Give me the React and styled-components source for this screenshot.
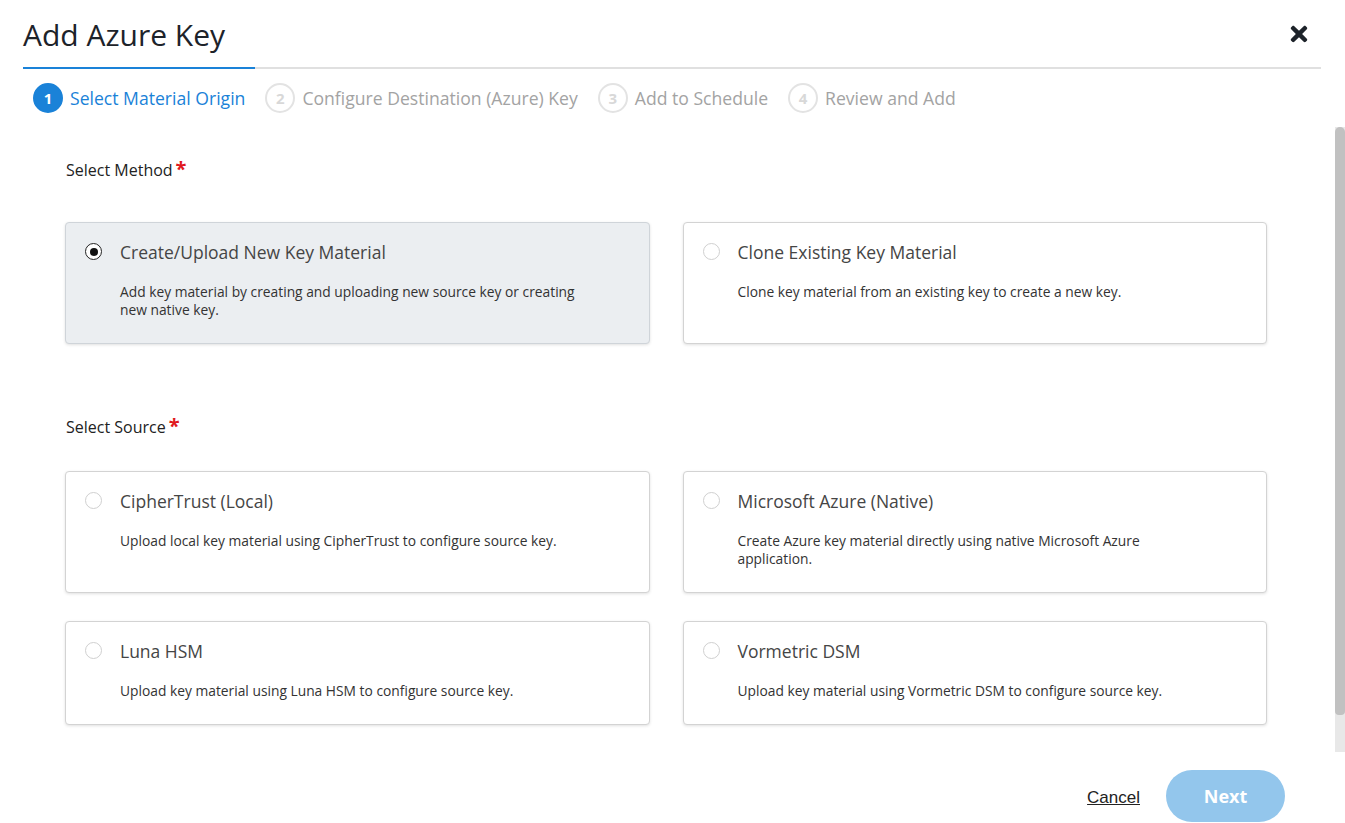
import React from "react";
import styled, { createGlobalStyle } from "styled-components";
import { FaTimes } from "react-icons/fa";

const GlobalStyle = createGlobalStyle`
  html, body {
    margin: 0;
    padding: 0;
    background: #ffffff;
    font-family: "Open Sans", "Noto Sans", sans-serif;
    overflow: hidden;
  }
  * {
    box-sizing: border-box;
  }
`;

const Page = styled.div`
  width: 1345px;
  height: 823px;
  display: flex;
  flex-direction: column;
  overflow: hidden;
`;

const Header = styled.div`
  margin: 0 24px 0 23px;
  display: flex;
  align-items: flex-end;
  justify-content: space-between;
  border-bottom: 2px solid #e0e0e0;
  height: 69px;
  flex-shrink: 0;
`;

const TitleTab = styled.div`
  width: 232px;
  border-bottom: 2px solid #1a82d8;
  margin-bottom: -2px;
  padding-bottom: 14px;
`;

const Title = styled.h1`
  margin: 0;
  font-size: 30px;
  font-weight: 400;
  line-height: 36px;
  color: #1d232a;
  white-space: nowrap;
`;

const CloseButton = styled.button`
  border: none;
  background: none;
  padding: 0;
  margin: 0 10px 21px 0;
  color: #1d232a;
  display: flex;
  cursor: pointer;
`;

const Stepper = styled.div`
  display: flex;
  align-items: center;
  height: 58px;
  flex-shrink: 0;
  padding-left: 33px;
  gap: 20px;
`;

const Step = styled.div`
  display: flex;
  align-items: center;
  gap: 7px;
`;

const StepCircle = styled.div`
  width: 30px;
  height: 30px;
  border-radius: 50%;
  display: flex;
  align-items: center;
  justify-content: center;
  font-size: 15px;
  font-weight: 700;
  background: ${(p) => (p.$active ? "#1a82d8" : "#ffffff")};
  color: ${(p) => (p.$active ? "#ffffff" : "#d8d8d8")};
  border: 2px solid ${(p) => (p.$active ? "#1a82d8" : "#e3e3e3")};
`;

const StepLabel = styled.span`
  font-size: 17.6px;
  color: ${(p) => (p.$active ? "#1a82d8" : "#a3a3a3")};
  white-space: nowrap;
`;

const Body = styled.div`
  height: 625px;
  flex-shrink: 0;
  display: flex;
`;

const Content = styled.div`
  flex: 1;
  overflow: hidden;
  padding: 32px 68px 0 65px;
`;

const ScrollTrack = styled.div`
  width: 10px;
  background: #e8e8e8;
  display: flex;
  flex-direction: column;
`;

const ScrollThumb = styled.div`
  height: 588px;
  background: #c1c1c1;
  border-radius: 5px 5px 4px 4px;
`;

const SectionLabel = styled.div`
  font-size: 16px;
  line-height: 22px;
  color: #222;
  margin-left: 1px;
  margin-bottom: ${(p) => p.$gap}px;
`;

const Required = styled.span`
  color: #e0191e;
  font-size: 20px;
  font-weight: 700;
  margin-left: 3px;
  line-height: 0;
  vertical-align: 0;
`;

const CardGrid = styled.div`
  display: grid;
  grid-template-columns: 1fr 1fr;
  column-gap: 33px;
  row-gap: 28px;
  margin-bottom: ${(p) => p.$gap || 0}px;
`;

const Card = styled.div`
  position: relative;
  border: 1px solid ${(p) => (p.$selected ? "#cfd4d9" : "#d3d3d3")};
  border-radius: 4px;
  background: ${(p) => (p.$selected ? "#ebeef1" : "#ffffff")};
  box-shadow: 0 1px 3px rgba(0, 0, 0, 0.12);
  padding: 17px 20px 24px 54px;
  cursor: pointer;
`;

const Radio = styled.span`
  position: absolute;
  left: 19px;
  top: 20px;
  width: 17px;
  height: 17px;
  border-radius: 50%;
  background: #fff;
  border: ${(p) => (p.$checked ? "1.5px solid #222" : "1px solid #d0d0d0")};
  display: flex;
  align-items: center;
  justify-content: center;

  &::after {
    content: "";
    display: ${(p) => (p.$checked ? "block" : "none")};
    width: 8px;
    height: 8px;
    border-radius: 50%;
    background: #111;
  }
`;

const CardTitle = styled.div`
  font-size: 17.5px;
  line-height: 24px;
  color: #454545;
  margin-bottom: 19px;
`;

const CardText = styled.div`
  font-size: 13.8px;
  line-height: 18px;
  color: #333;
  max-width: 465px;
`;

const Footer = styled.div`
  flex: 1;
  display: flex;
  justify-content: flex-end;
  align-items: flex-start;
  padding: 18px 60px 0 0;
  gap: 26px;
`;

const CancelLink = styled.a`
  font-family: "Liberation Sans", Arial, sans-serif;
  font-size: 17px;
  color: #222;
  text-decoration: underline;
  margin-top: 18px;
  cursor: pointer;
`;

const NextButton = styled.button`
  width: 119px;
  height: 52px;
  border: none;
  border-radius: 26px;
  background: #93c6ec;
  color: #ffffff;
  font-family: "Open Sans", sans-serif;
  font-size: 18px;
  font-weight: 700;
  cursor: not-allowed;
`;

const steps = [
  "Select Material Origin",
  "Configure Destination (Azure) Key",
  "Add to Schedule",
  "Review and Add",
];

const methods = [
  {
    title: "Create/Upload New Key Material",
    text: "Add key material by creating and uploading new source key or creating new native key.",
    selected: true,
  },
  {
    title: "Clone Existing Key Material",
    text: "Clone key material from an existing key to create a new key.",
  },
];

const sources = [
  {
    title: "CipherTrust (Local)",
    text: "Upload local key material using CipherTrust to configure source key.",
  },
  {
    title: "Microsoft Azure (Native)",
    text: "Create Azure key material directly using native Microsoft Azure application.",
  },
  {
    title: "Luna HSM",
    text: "Upload key material using Luna HSM to configure source key.",
  },
  {
    title: "Vormetric DSM",
    text: "Upload key material using Vormetric DSM to configure source key.",
  },
];

function OptionCard({ title, text, selected }) {
  return (
    <Card $selected={selected}>
      <Radio $checked={selected} />
      <CardTitle>{title}</CardTitle>
      <CardText>{text}</CardText>
    </Card>
  );
}

export default function App() {
  return (
    <Page>
      <GlobalStyle />
      <Header>
        <TitleTab>
          <Title>Add Azure Key</Title>
        </TitleTab>
        <CloseButton aria-label="Close">
          <FaTimes size={24} />
        </CloseButton>
      </Header>

      <Stepper>
        {steps.map((s, i) => (
          <Step key={s}>
            <StepCircle $active={i === 0}>{i + 1}</StepCircle>
            <StepLabel $active={i === 0}>{s}</StepLabel>
          </Step>
        ))}
      </Stepper>

      <Body>
        <Content>
          <SectionLabel $gap={41}>
            Select Method<Required>*</Required>
          </SectionLabel>
          <CardGrid $gap={72}>
            {methods.map((m) => (
              <OptionCard key={m.title} {...m} />
            ))}
          </CardGrid>

          <SectionLabel $gap={33}>
            Select Source<Required>*</Required>
          </SectionLabel>
          <CardGrid>
            {sources.map((s) => (
              <OptionCard key={s.title} {...s} />
            ))}
          </CardGrid>
        </Content>
        <ScrollTrack>
          <ScrollThumb />
        </ScrollTrack>
      </Body>

      <Footer>
        <CancelLink>Cancel</CancelLink>
        <NextButton>Next</NextButton>
      </Footer>
    </Page>
  );
}
